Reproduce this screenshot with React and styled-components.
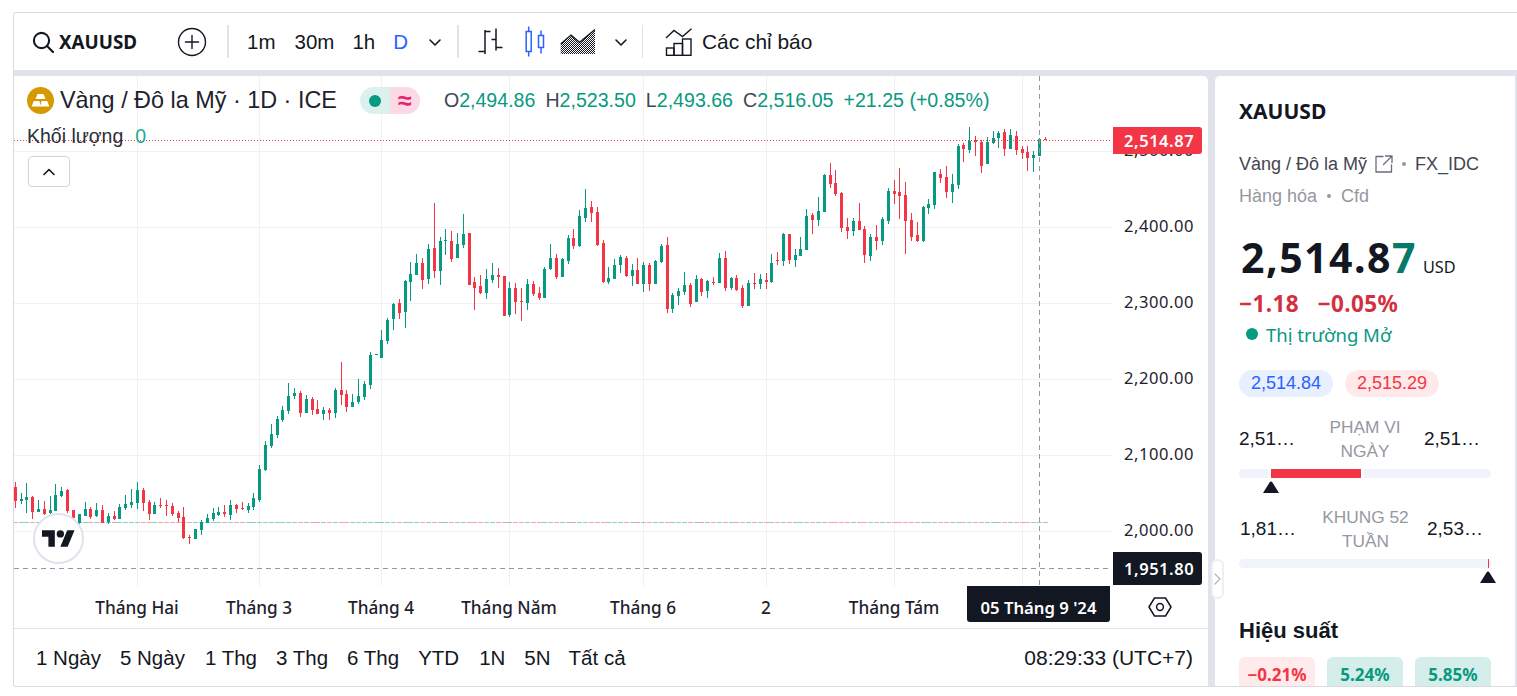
import React from 'react';
import styled, { createGlobalStyle } from 'styled-components';

const green = '#089981';
const red = '#f23645';
const ink = '#131722';
const band = '#e0e3eb';
const grey = '#9598a1';

const GlobalStyle = createGlobalStyle`
  html, body {
    margin: 0;
    padding: 0;
    background: #fff;
    overflow: hidden;
  }
  * { box-sizing: border-box; }
`;

// candles read off the chart, grouped by stretch: [x, wick top, wick bottom, body top, body bottom, colour]
// values are in 1/3 px relative to the origin of the stretch
const stretches = [
  { ox: 10, oy: 370, rows: [
    [16,336,414,351,393,'r'],[34,369,402,387,393,'g'],[49,339,429,381,390,'g'],[67,378,447,381,426,'r'],
    [85,390,426,417,426,'g'],[103,393,435,417,432,'r'],[121,378,432,420,430,'g'],[136,342,423,375,423,'g'],
    [154,351,381,363,378,'g'],[172,357,429,360,423,'r'],[190,420,465,420,445,'r'],[208,432,462,432,460,'g'],
    [226,396,438,417,438,'g'],[241,411,447,417,441,'r'],[259,399,441,420,438,'g'],[277,405,459,420,459,'r'],
    [295,429,462,438,456,'g'],[313,423,450,438,447,'r'],[328,402,447,411,447,'g'],[346,375,420,402,414,'g'],
    [364,357,414,396,405,'g'],[382,336,417,360,399,'g'],[400,354,423,360,399,'r'],[418,390,450,396,432,'r'],
    [433,396,432,405,432,'g'],[451,384,414,405,408,'r'],[469,390,438,405,407,'r'],[487,399,438,408,432,'r'],
    [505,423,456,429,444,'r'],[520,411,507,441,504,'r'],[538,495,522,501,504,'r'],[556,477,507,477,507,'g'],
    [574,450,495,456,480,'g'],[592,432,459,444,459,'g'],[610,414,453,429,447,'g'],[625,411,438,426,435,'g'],
    [643,405,441,426,432,'r'],[661,390,450,405,435,'g'],[679,402,429,405,417,'r'],[697,396,420,414,417,'r'],
    [715,399,429,408,420,'g'],[730,369,420,384,411,'g'],[748,285,396,297,390,'g'],[766,213,303,225,300,'g'],
    [784,162,234,192,228,'g'],[802,138,204,147,195,'g'],
  ]},
  { ox: 270, oy: 330, rows: [
    [37,228,276,240,270,'g'],[55,159,252,198,243,'g'],[73,174,207,189,198,'g'],[91,183,261,189,249,'r'],
    [109,195,249,207,249,'g'],[127,201,255,207,240,'r'],[142,210,252,237,252,'r'],[160,231,270,240,252,'g'],
    [178,234,270,240,249,'r'],[196,174,264,180,249,'g'],[214,96,225,180,195,'r'],[229,180,246,192,231,'r'],
    [247,192,231,216,231,'g'],[265,147,222,198,216,'g'],[283,153,210,162,201,'g'],[301,66,177,75,165,'g'],
    [319,72,75,72,75,'g'],
  ]},
  { ox: 240, oy: 180, rows: [
    [424,450,534,480,534,'g'],[442,414,491,420,483,'g'],[460,369,450,372,417,'g'],[478,357,417,369,399,'r'],
    [496,300,444,303,396,'g'],[511,246,363,282,306,'g'],[529,222,285,249,285,'g'],[547,234,327,249,300,'r'],
    [565,192,312,207,297,'g'],[583,69,294,204,273,'r'],[601,171,315,183,273,'g'],[616,147,225,180,183,'g'],
    [634,153,246,183,237,'r'],[652,159,234,192,234,'g'],[670,102,204,162,195,'g'],[688,159,315,159,315,'r'],
    [703,291,390,306,324,'r'],[721,285,342,318,339,'r'],[739,267,357,297,339,'g'],[757,249,309,285,300,'g'],
    [775,264,324,285,291,'r'],[793,288,408,288,408,'r'],[808,306,411,324,405,'g'],[826,309,402,324,366,'r'],
    [844,324,423,363,366,'r'],[862,297,390,312,369,'g'],[880,303,348,312,342,'r'],[898,321,360,339,354,'r'],
  ]},
  { ox: 540, oy: 180, rows: [
    [13,261,354,267,354,'g'],[31,192,270,234,267,'g'],[49,222,297,234,291,'r'],[67,234,291,237,291,'g'],
    [85,165,252,174,243,'g'],[100,147,207,174,198,'r'],[118,90,201,108,198,'g'],[136,27,126,84,114,'g'],
    [154,63,126,81,99,'r'],[172,81,198,96,195,'r'],[190,180,309,189,306,'r'],[205,261,312,294,306,'g'],
    [223,237,297,255,297,'g'],[241,225,279,231,255,'g'],[259,228,291,234,288,'r'],[277,252,318,270,288,'g'],
    [292,234,312,270,312,'r'],[310,246,336,255,312,'g'],[328,249,333,255,312,'r'],[346,240,312,243,312,'g'],
    [364,192,249,198,246,'g'],[382,171,399,195,387,'r'],[397,339,399,345,387,'g'],[415,324,375,333,348,'g'],
    [433,276,345,315,336,'g'],[451,309,381,315,372,'r'],[469,285,366,297,366,'g'],[484,294,348,297,336,'r'],
    [502,300,354,303,333,'g'],[520,291,315,306,309,'r'],[538,219,309,234,309,'g'],[556,213,333,234,324,'r'],
    [574,291,330,294,324,'g'],[589,285,333,294,330,'r'],[607,315,384,324,378,'r'],[625,300,378,309,378,'g'],
    [643,279,327,309,312,'r'],[661,282,327,297,312,'g'],[679,279,327,300,306,'r'],[694,222,309,249,306,'g'],
    [712,216,255,240,243,'r'],[730,159,258,162,243,'g'],[748,162,252,162,240,'r'],[766,207,261,225,240,'g'],
  ]},
  { ox: 780, oy: 120, rows: [
    [61,351,408,387,408,'g'],[79,267,390,288,390,'g'],[97,279,342,285,300,'r'],[115,231,318,273,300,'g'],
    [133,162,276,165,276,'g'],[151,129,204,165,192,'r'],[166,150,228,189,222,'r'],[184,216,336,219,324,'r'],
    [202,294,357,321,333,'r'],[220,294,348,303,333,'g'],[238,249,330,303,330,'r'],[253,318,429,327,405,'r'],
    [271,342,423,351,408,'g'],[289,315,390,351,363,'r'],[307,291,375,297,363,'g'],[325,204,312,213,303,'g'],
    [343,180,252,213,222,'r'],[358,144,297,216,228,'r'],[376,186,402,225,303,'r'],[394,279,363,300,351,'r'],
    [412,306,366,345,363,'r'],[430,258,366,261,363,'g'],[445,237,282,252,264,'g'],[463,156,267,156,255,'g'],
    [481,147,189,162,174,'r'],[499,138,234,171,216,'r'],[517,162,249,192,216,'g'],[535,72,207,78,195,'g'],
    [550,69,126,75,87,'r'],[568,21,99,63,90,'g'],[586,48,108,60,66,'r'],[604,60,159,66,138,'r'],
    [622,51,132,66,132,'g'],[640,33,72,54,69,'g'],[655,33,84,39,54,'g'],[673,27,108,36,87,'r'],
    [691,27,87,45,87,'g'],[709,33,105,48,90,'r'],[727,78,117,87,99,'r'],[742,78,153,96,114,'r'],
    [760,93,156,105,114,'g'],[778,54,108,57,108,'g'],[796,51,60,57,60,'r'],
  ]},
];

const candles = stretches.flatMap(({ ox, oy, rows }) =>
  rows.map(([x, hi, lo, top, bot, c]) => ({
    x: Math.floor(ox + x / 3),
    hi: oy + hi / 3,
    lo: oy + lo / 3,
    top: oy + top / 3,
    bot: oy + bot / 3,
    color: c === 'g' ? green : red,
  })),
);

const priceY = (price) => 530 - (price - 2000) * 0.76;
const priceLevels = [2500, 2400, 2300, 2200, 2100, 2000];
const gridRows = [151.5, 227.5, 303.5, 379.5, 455.5, 531.5];
const months = [
  { x: 137, label: 'Tháng Hai' },
  { x: 259, label: 'Tháng 3' },
  { x: 381, label: 'Tháng 4' },
  { x: 509, label: 'Tháng Năm' },
  { x: 643, label: 'Tháng 6' },
  { x: 766, label: '2' },
  { x: 894, label: 'Tháng Tám' },
  { x: 1022, label: '' },
];

const Frame = styled.div`
  margin: 12px 0 0 13px;
  width: 1504px;
  height: 675px;
  border: 1px solid #d9dae0;
  border-right: none;
  border-radius: 3px 0 0 3px;
  display: flex;
  flex-direction: column;
  overflow: hidden;
  font-family: "Liberation Sans", Arial, sans-serif;
  color: ${ink};
`;

const Toolbar = styled.div`
  height: 57px;
  flex: none;
  background: #fff;
  display: flex;
  align-items: center;
  padding-left: 18px;
  font-size: 20.5px;
`;

const SymbolSearch = styled.div`
  display: flex;
  align-items: center;
  gap: 5px;
  width: 145px;
  font-family: "Noto Sans", sans-serif;
  font-weight: 700;
  font-size: 18.8px;
`;

const IconSlot = styled.div`
  display: flex;
  align-items: center;
  margin-left: ${(p) => p.$left || 0}px;
  color: ${ink};
`;

const Divider = styled.div`
  width: ${(p) => p.$w || 2}px;
  height: 33px;
  background: ${band};
  margin-left: ${(p) => p.$left}px;
`;

const Interval = styled.span`
  margin-left: ${(p) => p.$left}px;
  font-size: ${(p) => p.$size || 20.5}px;
  color: ${(p) => (p.$active ? '#2962ff' : ink)};
`;

const Body = styled.div`
  flex: 1;
  min-height: 0;
  display: flex;
  gap: 7px;
  background: ${band};
  padding: 6px 2px 0 0;
`;

const ChartPanel = styled.div`
  width: 1194px;
  flex: none;
  background: #fff;
  border-top-right-radius: 5px;
  display: flex;
  flex-direction: column;
`;

const ChartRow = styled.div`
  display: flex;
  height: 510px;
  flex: none;
`;

const Pane = styled.div`
  position: relative;
  width: 1098px;
  height: 100%;
  flex: none;
  overflow: hidden;
`;

const PaneSvg = styled.svg`
  display: block;
  width: 1098px;
  height: 510px;
`;

const Legend = styled.div`
  position: absolute;
  left: 13px;
  top: 11px;
`;

const LegendTop = styled.div`
  display: flex;
  align-items: center;
  height: 27px;
`;

const TitleText = styled.span`
  font-size: 23.4px;
  margin-left: 6px;
  color: #1e222d;
  white-space: nowrap;
`;

const StatusPill = styled.div`
  display: flex;
  margin-left: 23px;
  height: 27px;
  border-radius: 14px;
  overflow: hidden;
`;

const StatusHalf = styled.div`
  width: 30px;
  display: flex;
  align-items: center;
  justify-content: center;
  background: ${(p) => p.$bg};
  color: #e6256a;
  font-size: 25px;
  font-weight: 700;
`;

const StatusDot = styled.span`
  width: 12px;
  height: 12px;
  border-radius: 50%;
  background: ${green};
`;

const Ohlc = styled.div`
  display: flex;
  margin-left: 24px;
  font-size: 19.6px;
  color: ${green};
  white-space: nowrap;
`;

const OhlcItem = styled.span`
  margin-right: 10px;
  b {
    font-weight: 400;
    color: #434651;
  }
`;

const VolumeRow = styled.div`
  margin-top: 10px;
  display: flex;
  font-size: 19.5px;
  height: 24px;
  line-height: 24px;
  color: #2a2e39;
`;

const VolumeValue = styled.span`
  margin-left: 12px;
  color: #22ab94;
`;

const CollapseButton = styled.div`
  margin: 8px 0 0 1px;
  width: 42px;
  height: 31px;
  background: #fff;
  border: 1px solid #d1d4dc;
  border-radius: 4px;
  display: flex;
  align-items: center;
  justify-content: center;
`;

const TvBadge = styled.div`
  position: absolute;
  left: 19px;
  top: 437px;
  width: 51px;
  height: 51px;
  border-radius: 50%;
  background: #fff;
  border: 2px solid ${band};
  display: flex;
  align-items: center;
  justify-content: center;
`;

const PriceAxis = styled.div`
  position: relative;
  flex: 1;
  font-family: "Noto Sans", sans-serif;
  font-size: 16.5px;
  letter-spacing: 0.55px;
  color: #1e222d;
`;

const PriceLabel = styled.span`
  position: absolute;
  left: 12px;
  line-height: 20px;
  margin-top: -86px;
`;

const PriceTag = styled.div`
  position: absolute;
  left: 1px;
  width: 89px;
  height: ${(p) => p.$h}px;
  top: ${(p) => p.$top}px;
  background: ${(p) => p.$bg};
  color: #fff;
  font-weight: 600;
  border-radius: 0 3px 3px 0;
  display: flex;
  align-items: center;
  padding-left: 11px;
`;

const TimeRow = styled.div`
  display: flex;
  height: 43px;
  flex: none;
  border-bottom: 1px solid #dfe2ea;
`;

const TimeAxis = styled.div`
  position: relative;
  width: 1098px;
  flex: none;
  font-family: "Noto Sans", sans-serif;
  font-size: 17.2px;
  font-weight: 500;
  color: #1e222d;
`;

const TimeLabel = styled.span`
  position: absolute;
  top: 10px;
  transform: translateX(-50%);
  white-space: nowrap;
`;

const DateTag = styled.div`
  position: absolute;
  left: 953px;
  top: 0;
  width: 143px;
  height: 36px;
  background: ${ink};
  color: #fff;
  font-weight: 600;
  font-size: 16.7px;
  border-radius: 0 0 3px 3px;
  display: flex;
  align-items: center;
  justify-content: center;
  padding-top: 7px;
`;

const AxisSettings = styled.div`
  flex: 1;
  display: flex;
  justify-content: center;
  padding: 11px 0 0 0;
`;

const RangeBar = styled.div`
  flex: 1;
  display: flex;
  align-items: center;
  padding: 0 15px 0 22px;
  font-size: 20.5px;
`;

const RangeButton = styled.span`
  margin-right: ${(p) => p.$gap}px;
`;

const Clock = styled.span`
  margin-left: auto;
  font-size: 21px;
`;

const SidePanel = styled.div`
  position: relative;
  width: 300px;
  flex: none;
  background: #fff;
  padding: 0 24px;
  overflow: hidden;
  border-top-left-radius: 5px;
`;

const ExpandTab = styled.div`
  position: absolute;
  left: 1211px;
  top: 559px;
  width: 13px;
  height: 40px;
  background: #fff;
  border: 2px solid #eceff4;
  border-radius: 6px;
  display: flex;
  align-items: center;
  justify-content: center;
`;

const SideTitle = styled.div`
  margin-top: 23px;
  font-family: "Noto Sans", sans-serif;
  font-weight: 700;
  font-size: 21px;
  line-height: 24px;
`;

const MetaRow = styled.div`
  margin-top: ${(p) => p.$top}px;
  display: flex;
  align-items: center;
  height: 24px;
  font-size: 18px;
  color: ${(p) => p.$color};
  white-space: nowrap;
`;

const MetaDot = styled.span`
  width: 4px;
  height: 4px;
  border-radius: 50%;
  background: ${grey};
  margin: 0 ${(p) => p.$gap}px;
`;

const ExternalSlot = styled.span`
  display: flex;
  margin-left: 8px;
`;

const PriceLine = styled.div`
  margin: 26px 0 0 2px;
  display: flex;
  align-items: baseline;
  font-family: "Noto Sans", sans-serif;
  font-weight: 700;
  font-size: 41px;
  line-height: 46px;
  white-space: nowrap;
  letter-spacing: 1.5px;
  em {
    font-style: normal;
    color: #057a68;
  }
`;

const Currency = styled.span`
  margin-left: 6px;
  font-size: 16.3px;
  font-weight: 400;
  letter-spacing: 0;
`;

const ChangeLine = styled.div`
  margin-top: 0;
  display: flex;
  gap: 18.5px;
  font-family: "Noto Sans", sans-serif;
  font-weight: 700;
  font-size: 22.5px;
  letter-spacing: 0.4px;
  line-height: 28px;
  color: #d32f3f;
`;

const MarketState = styled.div`
  margin: 2px 0 0 7px;
  display: flex;
  align-items: center;
  gap: 8px;
  height: 28px;
  font-family: "Noto Sans", sans-serif;
  font-size: 18.5px;
  color: ${green};
`;

const MarketDot = styled.span`
  width: 12px;
  height: 12px;
  border-radius: 50%;
  background: ${green};
`;

const QuotePills = styled.div`
  margin-top: 22px;
  display: flex;
  gap: 12px;
`;

const QuotePill = styled.span`
  width: 94px;
  height: 27px;
  border-radius: 14px;
  background: ${(p) => p.$bg};
  color: ${(p) => p.$color};
  font-size: 18px;
  display: flex;
  align-items: center;
  justify-content: center;
`;

const RangeBlock = styled.div`
  margin-top: ${(p) => p.$top}px;
`;

const RangeHead = styled.div`
  display: grid;
  grid-template-columns: 68px 1fr 68px;
  align-items: center;
  height: 48px;
  font-size: 19px;
  padding-left: ${(p) => p.$left}px;
`;

const RangeEnd = styled.span`
  padding-left: ${(p) => p.$left || 0}px;
`;

const RangeName = styled.span`
  text-align: center;
  line-height: 24px;
  font-size: 17.3px;
  color: ${grey};
`;

const Track = styled.div`
  position: relative;
  margin-top: ${(p) => p.$top}px;
  height: 9px;
  border-radius: 5px;
  background: #f0f3fa;
`;

const TrackFill = styled.div`
  position: absolute;
  top: 0;
  height: 100%;
  background: ${red};
  box-shadow: 0 0 0 3px #fff;
  clip-path: inset(0 -3px);
  left: ${(p) => p.$left}px;
  width: ${(p) => p.$width}px;
`;

const TrackTick = styled.div`
  position: absolute;
  top: 0;
  height: 100%;
  width: 1px;
  background: ${red};
  left: ${(p) => p.$left}px;
`;

const Marker = styled.svg`
  position: absolute;
  top: 12px;
  width: 16px;
  height: 12px;
  left: ${(p) => p.$left}px;
`;

const SectionTitle = styled.div`
  margin-top: 51px;
  font-weight: 700;
  font-size: 22px;
  line-height: 24px;
`;

const PerfGrid = styled.div`
  margin-top: 14px;
  display: grid;
  grid-template-columns: repeat(3, 76px);
  gap: 12px;
`;

const PerfCard = styled.div`
  height: 29px;
  border-radius: 6px 6px 0 0;
  padding-top: 6px;
  line-height: 23px;
  text-align: center;
  font-family: "Noto Sans", sans-serif;
  font-weight: 700;
  font-size: 17px;
  background: ${(p) => (p.$down ? '#ffebec' : '#d5eee9')};
  color: ${(p) => (p.$down ? red : green)};
`;

const Chevron = ({ up, color = ink }) => (
  <svg width="16" height="16" viewBox="0 0 16 16" fill="none" stroke={color} strokeWidth="1.6" strokeLinecap="round" strokeLinejoin="round">
    <path d={up ? 'M3 10.5 8 5.5l5 5' : 'M3 6l5 5 5-5'} />
  </svg>
);

const TabChevron = () => (
  <svg width="7" height="12" viewBox="0 0 7 12" fill="none" stroke="#b2b5be" strokeWidth="1.2" strokeLinecap="round" strokeLinejoin="round">
    <path d="M1 1l5 5-5 5" />
  </svg>
);

const SearchIcon = () => (
  <svg width="22" height="22" viewBox="0 0 22 22" fill="none" stroke={ink} strokeWidth="2.1" strokeLinecap="round">
    <circle cx="9.5" cy="9.5" r="7.6" />
    <path d="M15 15l6 6" />
  </svg>
);

const PlusIcon = () => (
  <svg width="30" height="30" viewBox="0 0 30 30" fill="none" stroke={ink} strokeWidth="1.4" strokeLinecap="round">
    <circle cx="15" cy="15" r="13.5" />
    <path d="M15 8.5v13M8.5 15h13" />
  </svg>
);

const BarsIcon = () => (
  <svg width="25" height="27" viewBox="0 0 25 27" fill="none" stroke={ink} strokeWidth="1.5">
    <path d="M7 2v24M0.5 23.5H7M7 3.5h5.5M18 0.5v22M13.5 11.5H18M18 19.5h6.5" />
  </svg>
);

const CandleIcon = () => (
  <svg width="21" height="31" viewBox="0 0 21 31" fill="none" stroke="#2962ff" strokeWidth="1.5">
    <rect x="1.2" y="5.5" width="5" height="20" />
    <path d="M3.7 0.5v5M3.7 25.5v5" />
    <rect x="13.5" y="9.5" width="5" height="12" />
    <path d="M16 4.5v5M16 21.5v6" />
  </svg>
);

const AreaIcon = () => (
  <svg width="37" height="26" viewBox="0 0 37 26">
    <defs>
      <pattern id="areaDots" width="2" height="2" patternUnits="userSpaceOnUse">
        <rect width="1" height="1" fill={ink} />
        <rect x="1" y="1" width="1" height="1" fill={ink} />
      </pattern>
    </defs>
    <path d="M0.7 25V15L11 6l8.6 7.3L35 0.5V25z" fill="url(#areaDots)" />
    <path d="M0.7 15L11 6l8.6 7.3L35 0.5" fill="none" stroke={ink} strokeWidth="1.3" />
  </svg>
);

const IndicatorIcon = () => (
  <svg width="27" height="28" viewBox="0 0 27 28" fill="none" stroke={ink} strokeWidth="1.4">
    <path d="M1 10L9 2.5l8.5 6L26.5 0.8" />
    <rect x="1.5" y="20" width="7.5" height="7.3" />
    <rect x="9" y="15.5" width="8.5" height="11.8" />
    <rect x="17.5" y="11" width="8.5" height="16.3" />
  </svg>
);

const GoldIcon = () => (
  <svg width="27" height="27" viewBox="0 0 27 27">
    <circle cx="13.5" cy="13.5" r="13.5" fill="#d69a00" />
    <path d="M10.5 7h6l2 5h-10zM6.8 14h5.6l1.4 5.5H4.6zM14.6 14h5.6l2.2 5.5h-9.2z" fill="#fff" />
  </svg>
);

const TvLogo = () => (
  <svg width="33" height="17" viewBox="0 4 36 18" fill={ink}>
    <path d="M14 22H7V11H0V4h14v18zM28 22h-8l7.5-18h8L28 22z" />
    <circle cx="20" cy="8" r="4" />
  </svg>
);

const HexIcon = () => (
  <svg width="24" height="20" viewBox="0 0 24 20" fill="none" stroke={ink} strokeWidth="1.5" strokeLinejoin="round">
    <path d="M1 10l5.5-9h11L23 10l-5.5 9h-11z" />
    <circle cx="12" cy="10" r="3.4" />
  </svg>
);

const ExternalIcon = () => (
  <svg width="18" height="18" viewBox="0 0 18 18" fill="none" stroke="#6a6d78" strokeWidth="1.3" strokeLinecap="round" strokeLinejoin="round">
    <path d="M8 1.5H1v15.5h15.5V10M10.5 1h6.5v6.5M17 1L8.5 9.5" />
  </svg>
);

const MarkerShape = () => (
  <path d="M8 0.5c.6 0 1 .3 1.3.8L16 12H0L6.7 1.3C7 .8 7.4.5 8 .5z" fill={ink} />
);

const ChartDrawing = () => (
  <PaneSvg viewBox="14 76 1098 510">
    {gridRows.map((y) => (
      <line key={y} x1="14" x2="1112" y1={y} y2={y} stroke="#f0f1f4" />
    ))}
    {months.map((m) => (
      <line key={m.x} x1={m.x + 0.5} x2={m.x + 0.5} y1="76" y2="586" stroke="#f0f1f4" />
    ))}
    <g shapeRendering="crispEdges">
      {candles.map((c) => (
        <line key={`b${c.x}`} x1={c.x - 2} x2={c.x + 3} y1="522.5" y2="522.5" stroke={c.color} strokeOpacity="0.48" />
      ))}
      {candles.map((c) => (
        <g key={c.x} fill={c.color}>
          <rect x={c.x} y={c.hi} width="1" height={Math.max(c.lo - c.hi, 1)} />
          <rect x={c.x - 1} y={c.top} width="3" height={Math.max(c.bot - c.top, 1)} />
        </g>
      ))}
    </g>
    <line x1="14" x2="1112" y1="140.5" y2="140.5" stroke={red} strokeDasharray="1 2" />
    <line x1="14" x2="1112" y1="568.5" y2="568.5" stroke={grey} strokeDasharray="5 4" />
    <line x1="1039.5" x2="1039.5" y1="76" y2="586" stroke={grey} strokeDasharray="5 4" />
  </PaneSvg>
);

const ohlc = [
  ['O', '2,494.86'],
  ['H', '2,523.50'],
  ['L', '2,493.66'],
  ['C', '2,516.05'],
];

const rangeButtons = [
  ['1 Ngày', 19],
  ['5 Ngày', 20],
  ['1 Thg', 19],
  ['3 Thg', 19],
  ['6 Thg', 19],
  ['YTD', 20],
  ['1N', 19],
  ['5N', 18],
  ['Tất cả', 0],
];

export default function App() {
  return (
    <>
      <GlobalStyle />
      <Frame>
        <Toolbar>
          <SymbolSearch>
            <SearchIcon />
            XAUUSD
          </SymbolSearch>
          <IconSlot>
            <PlusIcon />
          </IconSlot>
          <Divider $left={20} />
          <Interval $left={18}>1m</Interval>
          <Interval $left={19}>30m</Interval>
          <Interval $left={18}>1h</Interval>
          <Interval $left={18} $active>D</Interval>
          <IconSlot $left={19}>
            <Chevron />
          </IconSlot>
          <Divider $left={14} />
          <IconSlot $left={19}>
            <BarsIcon />
          </IconSlot>
          <IconSlot $left={22}>
            <CandleIcon />
          </IconSlot>
          <IconSlot $left={14}>
            <AreaIcon />
          </IconSlot>
          <IconSlot $left={16}>
            <Chevron />
          </IconSlot>
          <Divider $left={13} $w={1} />
          <IconSlot $left={22}>
            <IndicatorIcon />
          </IconSlot>
          <Interval $left={10} $size={20.9}>Các chỉ báo</Interval>
        </Toolbar>
        <Body>
          <ChartPanel>
            <ChartRow>
              <Pane>
                <ChartDrawing />
                <Legend>
                  <LegendTop>
                    <GoldIcon />
                    <TitleText>Vàng / Đô la Mỹ · 1D · ICE</TitleText>
                    <StatusPill>
                      <StatusHalf $bg="#dcf1ee">
                        <StatusDot />
                      </StatusHalf>
                      <StatusHalf $bg="#fbd9e5">≈</StatusHalf>
                    </StatusPill>
                    <Ohlc>
                      {ohlc.map(([k, v]) => (
                        <OhlcItem key={k}>
                          <b>{k}</b>
                          {v}
                        </OhlcItem>
                      ))}
                      <span>+21.25 (+0.85%)</span>
                    </Ohlc>
                  </LegendTop>
                  <VolumeRow>
                    Khối lượng
                    <VolumeValue>0</VolumeValue>
                  </VolumeRow>
                  <CollapseButton>
                    <Chevron up />
                  </CollapseButton>
                </Legend>
                <TvBadge>
                  <TvLogo />
                </TvBadge>
              </Pane>
              <PriceAxis>
                {priceLevels.map((p) => (
                  <PriceLabel key={p} style={{ top: priceY(p) }}>
                    {p.toLocaleString('en-US', { minimumFractionDigits: 2 })}
                  </PriceLabel>
                ))}
                <PriceTag $top={51} $h={27} $bg={red}>2,514.87</PriceTag>
                <PriceTag $top={476} $h={33} $bg={ink}>1,951.80</PriceTag>
              </PriceAxis>
            </ChartRow>
            <TimeRow>
              <TimeAxis>
                {months.filter((m) => m.label).map((m) => (
                  <TimeLabel key={m.x} style={{ left: m.x - 14 }}>{m.label}</TimeLabel>
                ))}
                <DateTag>05 Tháng 9 '24</DateTag>
              </TimeAxis>
              <AxisSettings>
                <HexIcon />
              </AxisSettings>
            </TimeRow>
            <RangeBar>
              {rangeButtons.map(([label, gap]) => (
                <RangeButton key={label} $gap={gap}>{label}</RangeButton>
              ))}
              <Clock>08:29:33 (UTC+7)</Clock>
            </RangeBar>
          </ChartPanel>
          <SidePanel>
            <SideTitle>XAUUSD</SideTitle>
            <MetaRow $top={29} $color="#434651">
              Vàng / Đô la Mỹ
              <ExternalSlot>
                <ExternalIcon />
              </ExternalSlot>
              <MetaDot $gap={9} />
              FX_IDC
            </MetaRow>
            <MetaRow $top={8} $color={grey}>
              Hàng hóa
              <MetaDot $gap={10} />
              Cfd
            </MetaRow>
            <PriceLine>
              2,514.8<em>7</em>
              <Currency>USD</Currency>
            </PriceLine>
            <ChangeLine>
              <span>−1.18</span>
              <span>−0.05%</span>
            </ChangeLine>
            <MarketState>
              <MarketDot />
              Thị trường Mở
            </MarketState>
            <QuotePills>
              <QuotePill $bg="#e8effe" $color="#2962ff">2,514.84</QuotePill>
              <QuotePill $bg="#ffe9ea" $color={red}>2,515.29</QuotePill>
            </QuotePills>
            <RangeBlock $top={18}>
              <RangeHead $left={0}>
                <span>2,51…</span>
                <RangeName>PHẠM VI NGÀY</RangeName>
                <RangeEnd $left={1}>2,51…</RangeEnd>
              </RangeHead>
              <Track $top={6}>
                <TrackFill $left={32} $width={90} />
                <Marker $left={24} viewBox="0 0 16 12"><MarkerShape /></Marker>
              </Track>
            </RangeBlock>
            <RangeBlock $top={27}>
              <RangeHead $left={1}>
                <span>1,81…</span>
                <RangeName>KHUNG 52 TUẦN</RangeName>
                <RangeEnd $left={4}>2,53…</RangeEnd>
              </RangeHead>
              <Track $top={6}>
                <TrackTick $left={249} />
                <Marker $left={241} viewBox="0 0 16 12"><MarkerShape /></Marker>
              </Track>
            </RangeBlock>
            <SectionTitle>Hiệu suất</SectionTitle>
            <PerfGrid>
              <PerfCard $down>−0.21%</PerfCard>
              <PerfCard>5.24%</PerfCard>
              <PerfCard>5.85%</PerfCard>
            </PerfGrid>
          </SidePanel>
          <ExpandTab>
            <TabChevron />
          </ExpandTab>
        </Body>
      </Frame>
    </>
  );
}
